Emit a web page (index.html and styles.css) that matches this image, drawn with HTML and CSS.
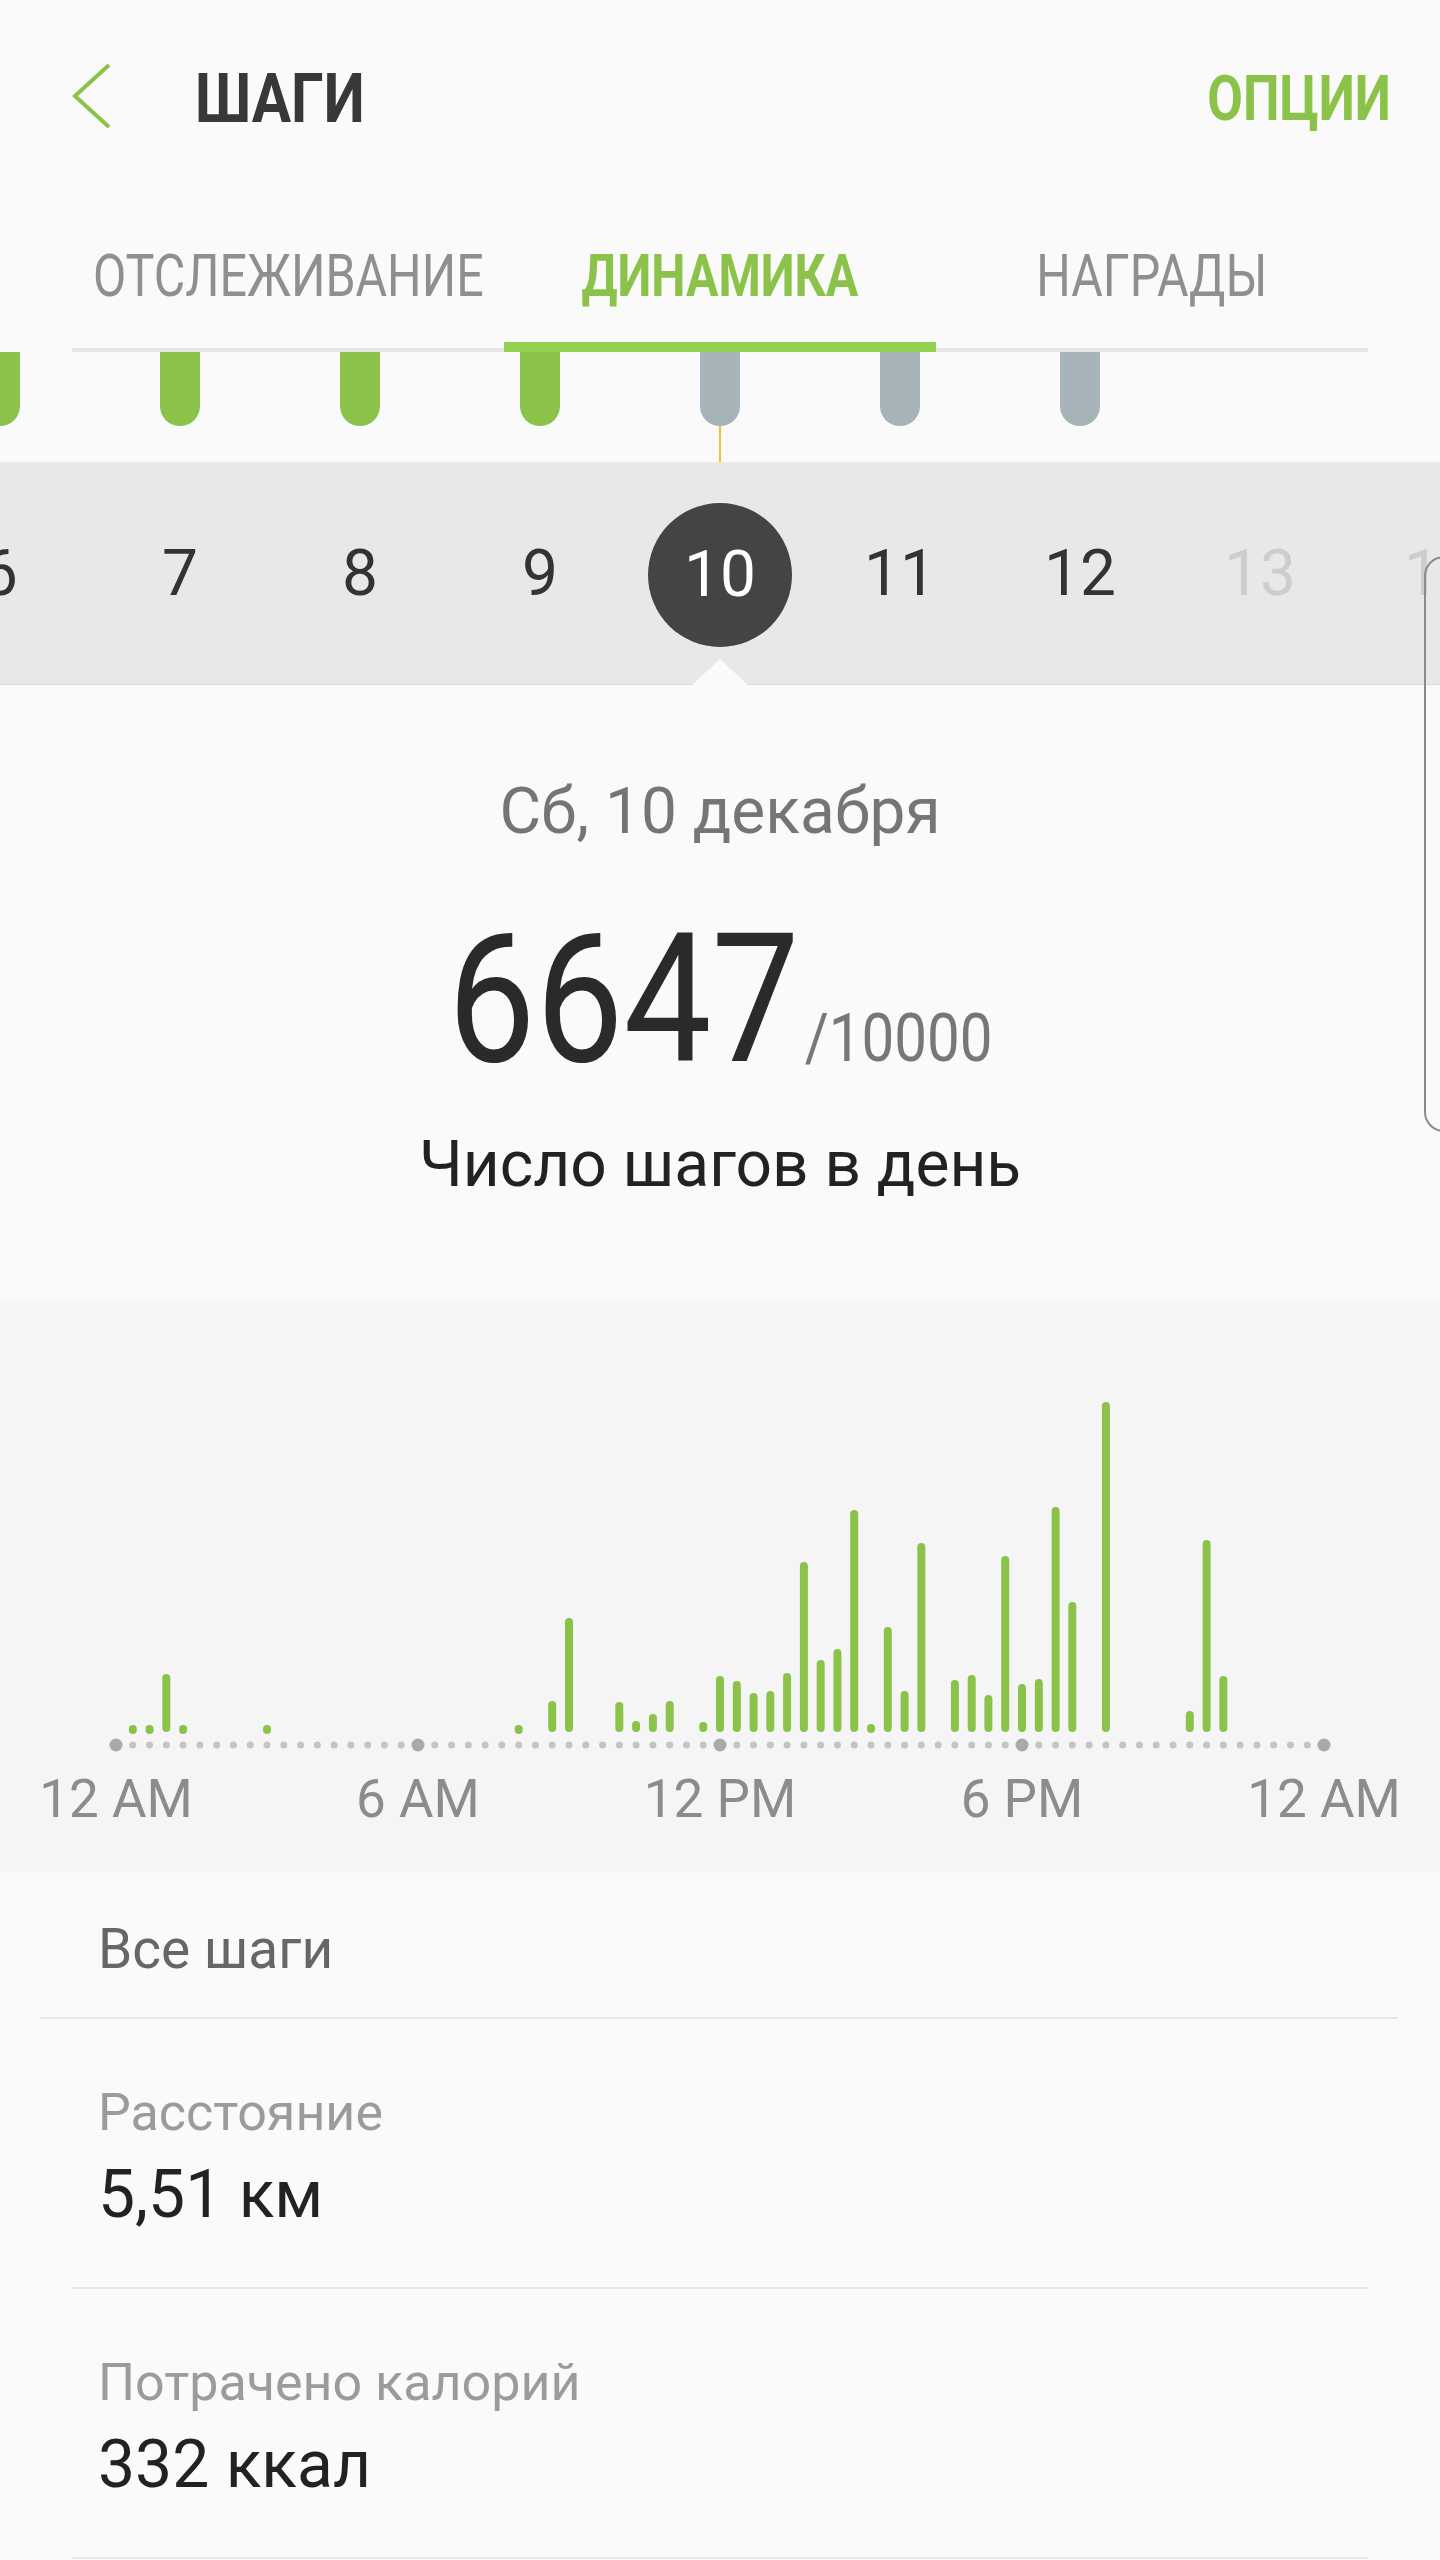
FILE: index.html
```html
<!DOCTYPE html>
<html lang="ru">
<head>
    <meta charset="UTF-8">
    <meta name="viewport" content="width=device-width, initial-scale=1.0">
    <title>Шаги</title>
    <link rel="stylesheet" href="styles.css">
</head>
<body>
    <div class="screen">
        <header class="top-bar">
            <a class="back" href="#">
                <svg width="40" height="68" viewBox="0 0 40 68">
                    <polyline points="37,3 3,34 37,65" fill="none" stroke="#8bc34a" stroke-width="4"/>
                </svg>
            </a>
            <h1 class="title"><span>ШАГИ</span></h1>
            <a class="options" href="#"><span>ОПЦИИ</span></a>
        </header>

        <nav class="tabs">
            <div class="tab"><span>ОТСЛЕЖИВАНИЕ</span></div>
            <div class="tab active"><span>ДИНАМИКА</span></div>
            <div class="tab"><span>НАГРАДЫ</span></div>
        </nav>

        <div class="goal-row">
            <div class="goal"><span class="pill done"></span></div>
            <div class="goal"><span class="pill done"></span></div>
            <div class="goal"><span class="pill done"></span></div>
            <div class="goal"><span class="pill done"></span></div>
            <div class="goal"><span class="pill"></span><span class="marker"></span></div>
            <div class="goal"><span class="pill"></span></div>
            <div class="goal"><span class="pill"></span></div>
            <div class="goal"></div>
            <div class="goal"></div>
        </div>

        <div class="day-row">
            <div class="day"><span class="num">6</span></div>
            <div class="day"><span class="num">7</span></div>
            <div class="day"><span class="num">8</span></div>
            <div class="day"><span class="num">9</span></div>
            <div class="day selected"><span class="num">10</span></div>
            <div class="day"><span class="num">11</span></div>
            <div class="day"><span class="num">12</span></div>
            <div class="day future"><span class="num">13</span></div>
            <div class="day future"><span class="num">14</span></div>
        </div>

        <section class="summary">
            <div class="date">Сб, 10 декабря</div>
            <div class="total">6647<span class="goal-of">/10000</span></div>
            <div class="label">Число шагов в день</div>
        </section>

        <section class="chart">
            <svg width="1440" height="571" viewBox="0 0 1440 571">
                <line x1="116" y1="444" x2="1324" y2="444" stroke="#c4c4c4" stroke-width="7" stroke-linecap="round" stroke-dasharray="0 16.778"/>
                <g fill="#a9a9a9">
                    <circle cx="116" cy="444" r="6.5"/>
                    <circle cx="418" cy="444" r="6.5"/>
                    <circle cx="720" cy="444" r="6.5"/>
                    <circle cx="1022" cy="444" r="6.5"/>
                    <circle cx="1324" cy="444" r="6.5"/>
                </g>
                <path fill="none" stroke="#8bc34a" stroke-width="8" stroke-linecap="round"
                      d="M132.8 428V429 M149.6 428V429 M166.3 377V427 M183.1 428V429 M267 428V429
                         M518.7 428V429 M552.2 404V427 M569 321V427 M619.3 405V427 M636.1 424V427
                         M652.9 417V427 M669.7 404V427 M703.2 425V427 M720 379V427 M736.8 384V427
                         M753.6 396V427 M770.3 394V427 M787.1 376V427 M803.9 265V427 M820.7 363V427
                         M837.4 352V427 M854.2 213V427 M871 427V428 M887.8 330V427 M904.6 394V427
                         M921.3 246V427 M954.9 383V427 M971.7 378V427 M988.4 398V427 M1005.2 259V427
                         M1022 387V427 M1038.8 382V427 M1055.6 210V427 M1072.3 305V427 M1105.9 105V427
                         M1189.8 414V427 M1206.6 243V427 M1223.3 379V427"/>
                <g class="axis">
                    <text x="116" y="516">12 AM</text>
                    <text x="418" y="516">6 AM</text>
                    <text x="720" y="516">12 PM</text>
                    <text x="1022" y="516">6 PM</text>
                    <text x="1324" y="516">12 AM</text>
                </g>
            </svg>
        </section>

        <section class="stats">
            <div class="stats-head">Все шаги</div>
            <div class="stat">
                <div class="stat-label">Расстояние</div>
                <div class="stat-value">5,51 км</div>
            </div>
            <div class="stat">
                <div class="stat-label">Потрачено калорий</div>
                <div class="stat-value">332 ккал</div>
            </div>
        </section>

        <div class="edge-handle"></div>
    </div>
</body>
</html>
```

FILE: styles.css
```css
body {
    margin: 0;
    background-color: #fafafa;
    font-family: Roboto, "Noto Sans", sans-serif;
}
.screen {
    position: relative;
    overflow: hidden;
    height: 2560px;
}

/* top bar */
.top-bar {
    display: flex;
    align-items: center;
    height: 192px;
    padding: 0 49px 0 72px;
}
.back svg {
    display: block;
}
.title {
    flex: 1;
    margin: 5px 0 0 83px;
    font-size: 69px;
    font-weight: 700;
    line-height: 1;
    color: #383838;
}
.title span {
    display: inline-block;
    transform: scaleX(0.85);
    transform-origin: left center;
}
.options {
    margin-top: 5px;
    font-size: 63px;
    font-weight: 700;
    line-height: 1;
    color: #8bc34a;
    text-decoration: none;
}
.options span {
    display: inline-block;
    transform: scaleX(0.82);
    transform-origin: right center;
}

/* tabs */
.tabs {
    display: grid;
    grid-template-columns: repeat(3, minmax(0, 1fr));
    margin: 0 72px;
    border-bottom: 4px solid #e5e5e5;
}
.tab {
    position: relative;
    height: 146px;
    padding-top: 10px;
    display: flex;
    align-items: center;
    justify-content: center;
    font-size: 59px;
    color: #8f8f8f;
    white-space: nowrap;
}
.tab span {
    display: inline-block;
    transform: scaleX(0.82);
}
.tab.active {
    color: #8bc34a;
    font-weight: 700;
}
.tab.active::after {
    content: '';
    position: absolute;
    left: 0;
    right: 0;
    bottom: -4px;
    height: 10px;
    background-color: #93d14f;
}

/* daily goal pills */
.goal-row {
    display: flex;
    height: 110px;
    margin: 0 -90px;
}
.goal {
    flex: 0 0 180px;
    display: flex;
    flex-direction: column;
    align-items: center;
}
.pill {
    width: 40px;
    height: 74px;
    border-radius: 0 0 20px 20px;
    background-color: #a6b4ba;
}
.pill.done {
    background-color: #8bc34a;
}
.marker {
    width: 2px;
    height: 36px;
    background-color: #f2c12e;
}

/* days strip */
.day-row {
    display: flex;
    height: 222px;
    margin: 0 -90px;
    background-color: #e8e8e8;
    border-bottom: 1px solid #d8d8d8;
}
.day {
    position: relative;
    flex: 0 0 180px;
    display: flex;
    align-items: center;
    justify-content: center;
    font-size: 64px;
    color: #333;
}
.day.future {
    color: #cdcdcd;
}
.day.selected .num {
    display: flex;
    align-items: center;
    justify-content: center;
    width: 144px;
    height: 144px;
    margin-top: 3px;
    border-radius: 50%;
    background-color: #444;
    color: #fff;
}
.day.selected::after {
    content: '';
    position: absolute;
    left: 50%;
    bottom: -1px;
    margin-left: -28px;
    border-style: solid;
    border-width: 0 28px 26px;
    border-color: transparent transparent #fafafa;
}

/* summary */
.summary {
    padding: 87px 0 96px;
    text-align: center;
}
.date {
    font-size: 64px;
    line-height: 80px;
    color: #757575;
}
.total {
    margin-top: 58px;
    font-size: 180px;
    line-height: 180px;
    color: #2a2a2a;
    transform: scaleX(0.87);
}
.goal-of {
    margin-left: 6px;
    font-size: 67px;
    line-height: 1;
    color: #777;
}
.label {
    margin-top: 35px;
    font-size: 64px;
    line-height: 80px;
    color: #222;
}

/* hourly chart */
.chart {
    height: 571px;
    background-color: #f5f5f5;
}
.chart svg {
    display: block;
}
.axis text {
    font-family: Roboto, "Noto Sans", sans-serif;
    font-size: 53px;
    fill: #8c8c8c;
    text-anchor: middle;
}

/* stats list */
.stats-head {
    display: flex;
    align-items: center;
    height: 136px;
    padding: 9px 0 0 58px;
    margin: 0 42px 0 40px;
    border-bottom: 2px solid #e8e8e8;
    font-size: 55px;
    color: #666;
}
.stat {
    margin: 0 72px;
    padding: 62px 0 52px 26px;
    border-bottom: 2px solid #e8e8e8;
}
.stat-label {
    font-size: 52px;
    line-height: 64px;
    color: #9b9b9b;
}
.stat-value {
    margin-top: 10px;
    font-size: 66px;
    line-height: 80px;
    color: #222;
}

.edge-handle {
    position: absolute;
    top: 556px;
    left: 1424px;
    width: 30px;
    height: 572px;
    border: 2px solid #8a8a8a;
    border-right: 0;
    border-radius: 20px 0 0 20px;
}
```
